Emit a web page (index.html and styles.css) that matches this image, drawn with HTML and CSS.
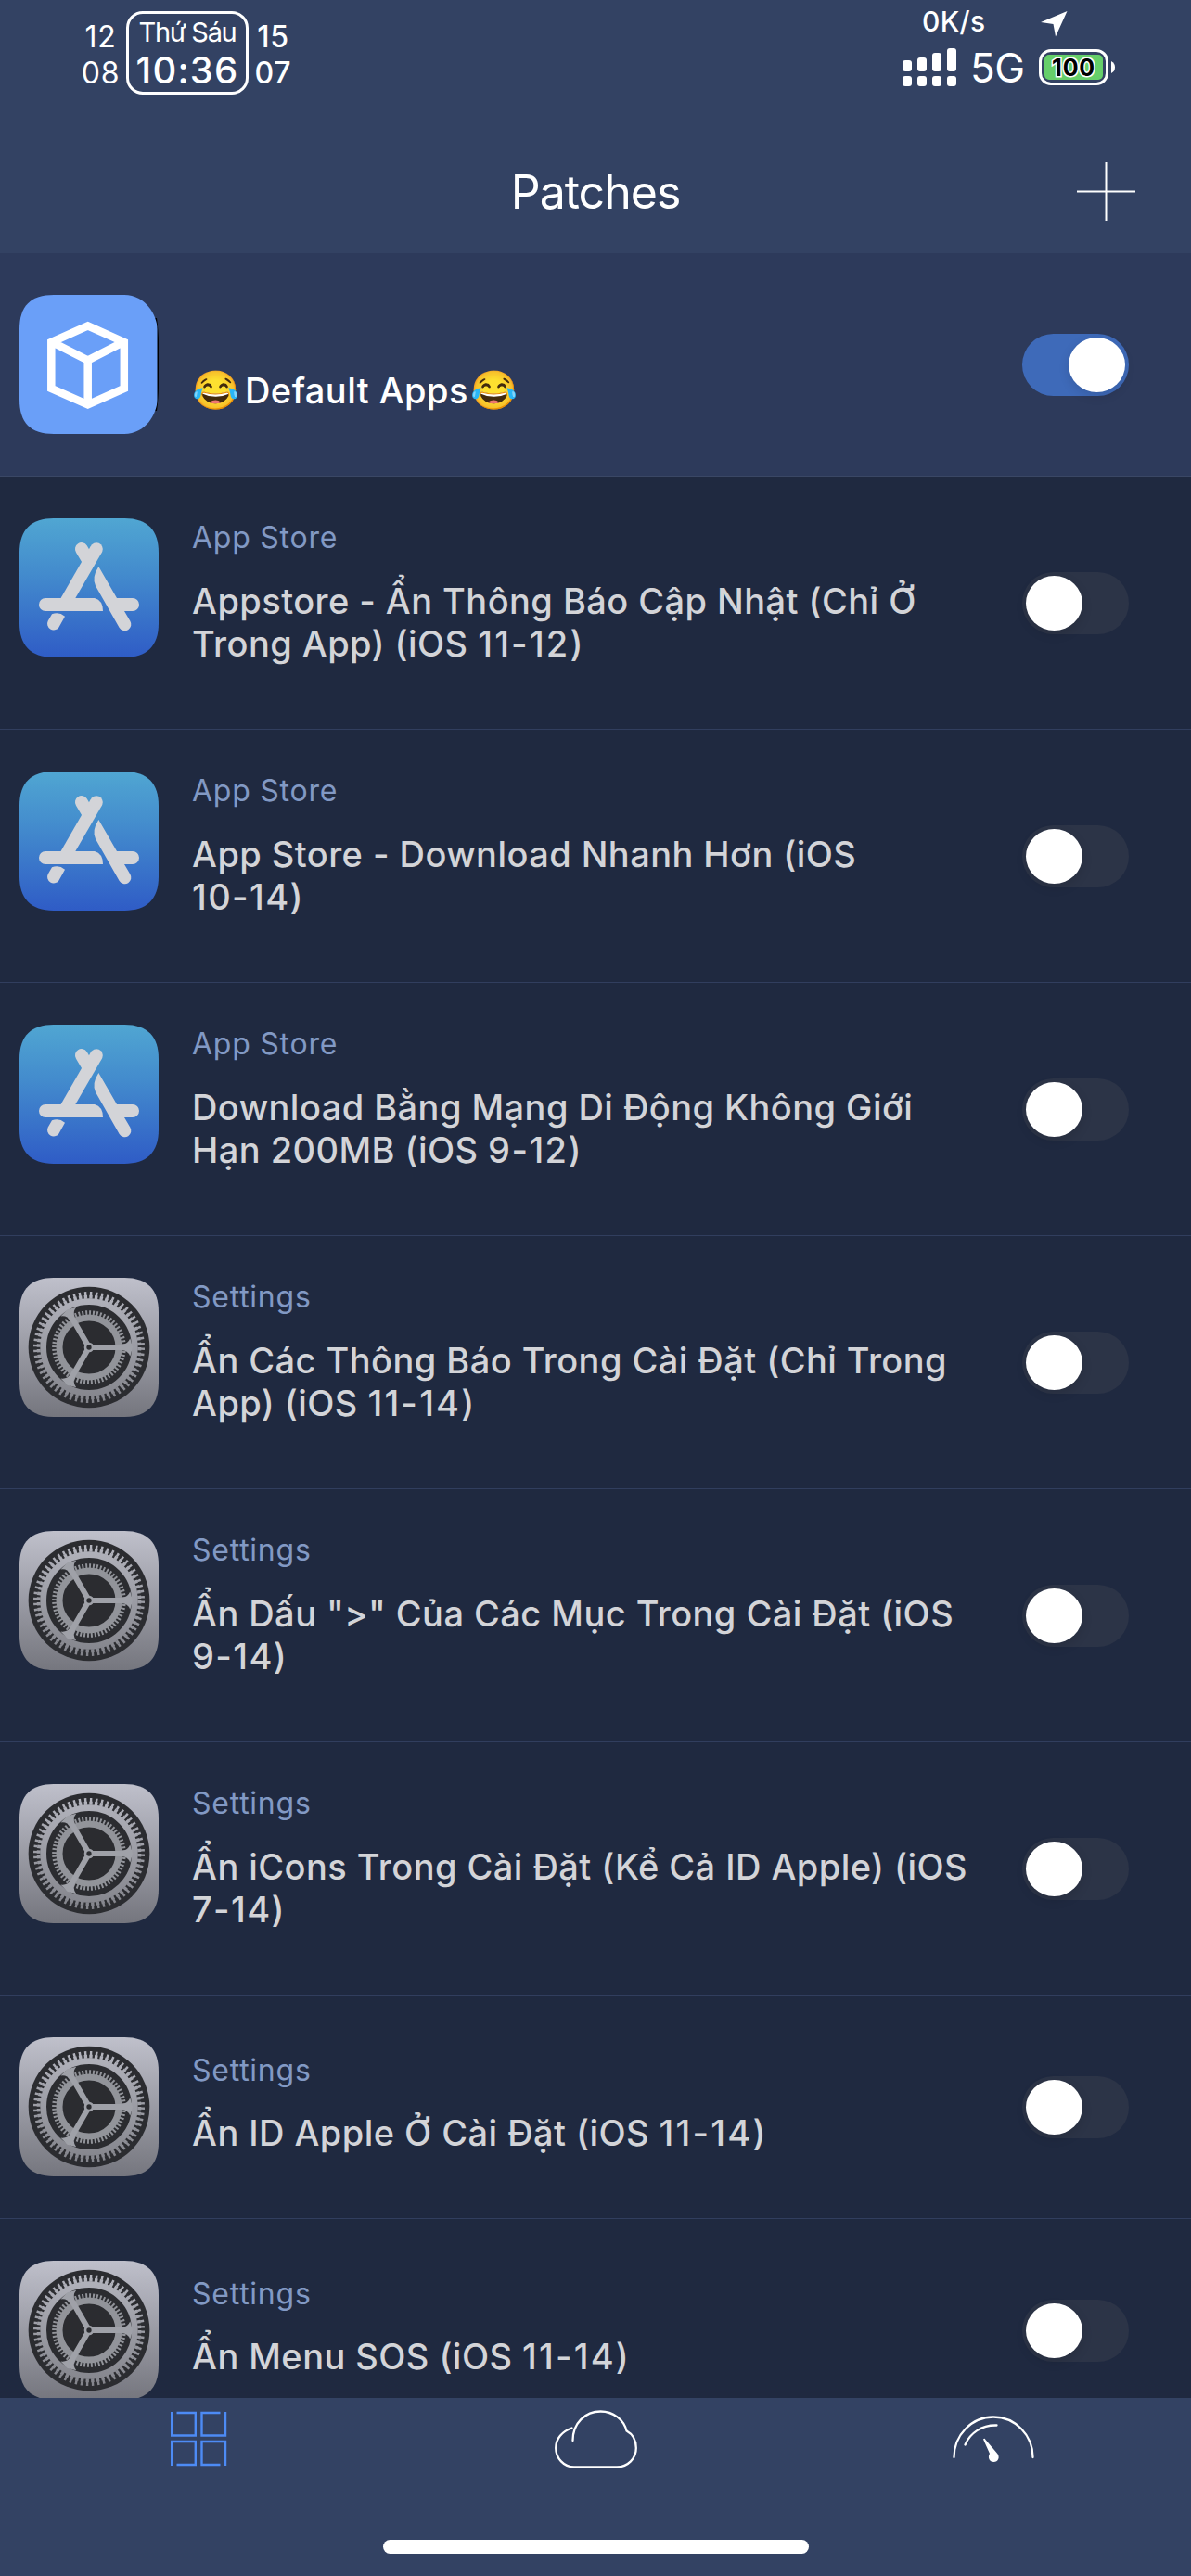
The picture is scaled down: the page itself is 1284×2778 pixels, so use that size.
FILE: index.html
```html
<!DOCTYPE html>
<html lang="vi">
<head>
<meta charset="utf-8">
<title>Patches</title>
<link rel="stylesheet" href="styles.css">
</head>
<body>
<svg class="defs" width="0" height="0" aria-hidden="true">
  <defs>
    <linearGradient id="store-bg" x1="0" y1="0" x2="0" y2="1">
      <stop offset="0" stop-color="#50a6d2"/><stop offset=".4" stop-color="#438bcd"/><stop offset="1" stop-color="#2f5cc6"/>
    </linearGradient>
    <linearGradient id="gear-bg" x1="0" y1="0" x2="0" y2="1">
      <stop offset="0" stop-color="#bfc0cb"/><stop offset="1" stop-color="#75767e"/>
    </linearGradient>
    <linearGradient id="ring" gradientUnits="userSpaceOnUse" x1="0" y1="45" x2="0" y2="405">
      <stop offset="0" stop-color="#b3b4bd"/><stop offset="1" stop-color="#83848b"/>
    </linearGradient>
  </defs>
  <symbol id="app-store" viewBox="0 0 450 450">
    <path fill="url(#store-bg)" d="M110 0H340C415 0 450 40 450 110V340C450 415 410 450 340 450H110C35 450 0 410 0 340V110C0 35 40 0 110 0Z"/>
    <g transform="translate(-63 -87)" fill="#d3d4d8">
      <path d="M312 186L211 361" stroke="#d3d4d8" stroke-width="41"/>
      <circle cx="312" cy="186" r="20.500"/>
      <path d="M246 197A20.500 20.500 0 0 1 281 175L288 187L300 205L266 231Z"/>
      <path d="M147 345H306Q333 352 333 387H147A21 21 0 0 1 147 345Z"/>
      <path d="M319 243L378 345H429A21 21 0 0 1 429 387H402L421 419A20.500 20.500 0 0 1 386 441L309 305Q296 278 319 243Z"/>
      <path d="M155 419L168 397Q190 388 210 404L190 440A20.500 20.500 0 0 1 155 419Z"/>
    </g>
  </symbol>
  <symbol id="settings" viewBox="0 0 450 450">
    <path fill="url(#gear-bg)" d="M110 0H340C415 0 450 40 450 110V340C450 415 410 450 340 450H110C35 450 0 410 0 340V110C0 35 40 0 110 0Z"/>
    <circle cx="225" cy="225" r="196" fill="#2b2c30"/>
    <g fill="none" stroke="url(#ring)">
      <circle cx="225" cy="225" r="148" stroke-width="20"/>
      <circle cx="225" cy="225" r="163" stroke-width="12" pathLength="120" stroke-dasharray="1.2 .8"/>
      <circle cx="225" cy="225" r="174" stroke-width="12" pathLength="120" stroke-dasharray=".8 1.2" stroke-dashoffset="-.2"/>
    </g>
    <g fill="none" stroke="#92949a">
      <circle cx="225" cy="225" r="96" stroke-width="21"/>
      <circle cx="225" cy="225" r="112" stroke-width="15" pathLength="120" stroke-dasharray="1 1"/>
    </g>
    <g fill="#9fa1a8">
      <path d="M225 216H330Q350 216 358 196L366 225L358 254Q350 234 330 234H225Z"/>
      <path transform="rotate(120 225 225)" d="M225 216H330Q350 216 358 196L366 225L358 254Q350 234 330 234H225Z"/>
      <path transform="rotate(240 225 225)" d="M225 216H330Q350 216 358 196L366 225L358 254Q350 234 330 234H225Z"/>
      <circle cx="225" cy="225" r="16"/>
    </g>
    <circle cx="225" cy="225" r="8" fill="#2b2c30"/>
  </symbol>
</svg>

<div class="screen">
  <header class="header">
    <div class="status">
      <div class="clock">
        <div class="date"><span>12</span><span>08</span></div>
        <div class="time"><span class="weekday">Thứ Sáu</span><span class="hour">10:36</span></div>
        <div class="date medium"><span>15</span><span>07</span></div>
      </div>
      <div class="indicators">
        <div class="speed">
          <span>0K/s</span>
          <svg width="29" height="28" viewBox="0 0 29 28"><path fill="#fff" d="M28.500 0L16 27.500L13.500 14L0 12Z"/></svg>
        </div>
        <div class="network">
          <svg width="58" height="41" viewBox="0 0 58 41" fill="#fff">
            <rect y="13" width="10" height="12" rx="3"/><rect x="16" y="10" width="10" height="15" rx="3"/><rect x="32" y="5" width="10" height="20" rx="3"/><rect x="48" width="10" height="25" rx="3"/>
            <rect y="30" width="10" height="11" rx="3"/><rect x="16" y="30" width="10" height="11" rx="3"/><rect x="32" y="30" width="10" height="11" rx="3"/><rect x="48" y="30" width="10" height="11" rx="3"/>
          </svg>
          <span class="carrier">5G</span>
          <div class="battery"><span>100</span></div>
          <svg class="nub" width="4" height="13" viewBox="0 0 4 13"><path fill="#fff" d="M0 0Q4 2 4 6.500T0 13Z"/></svg>
        </div>
      </div>
    </div>
    <div class="nav">
      <h1>Patches</h1>
      <svg class="plus" width="63" height="63" viewBox="0 0 63 63"><path stroke="#fff" stroke-width="2" d="M31.500 0V63M0 31.500H63"/></svg>
    </div>
  </header>

  <main class="list">
    <section class="row single active">
      <svg class="icon" viewBox="0 0 150 150">
        <path fill="#000" d="M140 25H148Q150 40 150 50V100Q150 110 148 125H140Z"/>
        <path fill="#6a9ff8" d="M37 0H113C136 0 148.500 22 148.500 37V113C148.500 128 136 150 113 150H37C12 150 0 138 0 113V37C0 12 12 0 37 0Z"/>
        <path fill="none" stroke="#fff" stroke-width="8.500" d="M73.700 33.300L112.800 51V101L73.700 118.300L34.300 101V51ZM34.300 50.500L73.700 70.500L112.800 50.500M73.700 70V118"/>
      </svg>
      <div class="text"><div class="label"></div><div class="name"><span class="emoji">😂</span>Default Apps<span class="emoji last">😂</span></div></div>
      <div class="switch on"></div>
    </section>
    <section class="row">
      <svg class="icon"><use href="#app-store"/></svg>
      <div class="text"><div class="label">App Store</div><div class="name">Appstore - Ẩn Thông Báo Cập Nhật (Chỉ Ở<br>Trong App) (iOS <span class="version wide">11-12</span>)</div></div>
      <div class="switch"></div>
    </section>
    <section class="row">
      <svg class="icon"><use href="#app-store"/></svg>
      <div class="text"><div class="label">App Store</div><div class="name">App Store - Download Nhanh Hơn (iOS<br><span class="version">10-14</span>)</div></div>
      <div class="switch"></div>
    </section>
    <section class="row">
      <svg class="icon"><use href="#app-store"/></svg>
      <div class="text"><div class="label">App Store</div><div class="name">Download Bằng Mạng Di Động Không Giới<br>Hạn 200MB (iOS <span class="version">9-12</span>)</div></div>
      <div class="switch"></div>
    </section>
    <section class="row">
      <svg class="icon"><use href="#settings"/></svg>
      <div class="text"><div class="label">Settings</div><div class="name">Ẩn Các Thông Báo Trong Cài Đặt (Chỉ Trong<br>App) (iOS <span class="version wide">11-14</span>)</div></div>
      <div class="switch"></div>
    </section>
    <section class="row">
      <svg class="icon"><use href="#settings"/></svg>
      <div class="text"><div class="label">Settings</div><div class="name">Ẩn Dấu "&gt;" Của Các Mục Trong Cài Đặt (iOS<br><span class="version">9-14</span>)</div></div>
      <div class="switch"></div>
    </section>
    <section class="row">
      <svg class="icon"><use href="#settings"/></svg>
      <div class="text"><div class="label">Settings</div><div class="name">Ẩn iCons Trong Cài Đặt (Kể Cả ID Apple) (iOS<br><span class="version">7-14</span>)</div></div>
      <div class="switch"></div>
    </section>
    <section class="row single">
      <svg class="icon"><use href="#settings"/></svg>
      <div class="text"><div class="label">Settings</div><div class="name">Ẩn ID Apple Ở Cài Đặt (iOS <span class="version wide">11-14</span>)</div></div>
      <div class="switch"></div>
    </section>
    <section class="row single">
      <svg class="icon"><use href="#settings"/></svg>
      <div class="text"><div class="label">Settings</div><div class="name">Ẩn Menu SOS (iOS <span class="version wide">11-14</span>)</div></div>
      <div class="switch"></div>
    </section>
  </main>

  <footer class="tabs">
    <nav class="tab-row">
      <svg width="90" height="66" viewBox="0 0 90 66" fill="none" stroke="#4d8bf5" stroke-width="2.400">
        <path d="M16.200 3V28.500H41.800V4H21.500M74 3V28.500H48.500V4H68.500M16.200 61V35H41.800V60H21.500M74 61V35H48.500V60H68.500"/>
      </svg>
      <svg width="90" height="66" viewBox="-1 0 90 66" fill="none" stroke="#fff" stroke-width="2.300" stroke-linecap="round" stroke-linejoin="round">
        <path d="M18.500 20.500C8 24 1.200 32 1.200 42C1.200 53 10 62.500 21 62.500H67C79 62.500 87.800 53 87.800 42C87.800 34 84 27 77.500 23.500C74.500 11 63 2.500 49.500 2.500C33 2.500 19.500 15 19.500 34"/>
      </svg>
      <svg width="90" height="66" viewBox="-1.500 0 90 66" fill="none" stroke="#fff" stroke-width="2.300" stroke-linecap="round">
        <path d="M2 52A42.500 43.500 0 0 1 87 52M14 38.500C19 26 32 17 48 17.500"/>
        <path fill="#fff" stroke="none" d="M33.500 32.500Q35 31 36 33L47.500 46.500C53 52 49 57 45 57C40 57 38 52 40.500 48Z"/>
      </svg>
    </nav>
    <div class="home"></div>
  </footer>
</div>
</body>
</html>
```
FILE: styles.css
```css
* { box-sizing: border-box; }
body { margin: 0; background: #1f2940; font-family: Inter, "Noto Sans", sans-serif; color: #fff; }
.defs { position: absolute; }
svg { display: block; flex: none; }
.screen { display: flex; flex-direction: column; width: 1284px; height: 2778px; overflow: hidden; }

.header { flex: none; height: 273px; background: #334263; }
.status { display: flex; justify-content: space-between; height: 120px; padding: 5px 82px 0 88px; }
.clock { display: flex; align-items: flex-start; }
.date { display: flex; flex-direction: column; align-items: center; width: 41px; padding-top: 15px; font-size: 32px; line-height: 39px; letter-spacing: .8px; }
.medium { font-weight: 500; }
.time { display: flex; flex-direction: column; align-items: center; width: 132px; height: 90px; margin: 7px 6px 0 7px; padding-top: 2px; border: 3px solid #fff; border-radius: 18px; white-space: nowrap; }
.weekday { font-size: 29px; line-height: 35px; letter-spacing: -1.3px; }
.hour { font-size: 40px; line-height: 47px; font-weight: 450; letter-spacing: 1.2px; }

.indicators { width: 229px; }
.speed { display: flex; align-items: center; height: 36px; padding-left: 21px; font-size: 30px; line-height: 36px; font-weight: 500; letter-spacing: .3px; }
.speed svg { margin: 6px 0 0 60px; }
.network { display: flex; align-items: center; height: 41px; margin-top: 11px; }
.carrier { width: 59px; margin: 2px 15px 0 15px; font-size: 44px; line-height: 41px; letter-spacing: -.6px; }
.battery { display: flex; align-items: center; justify-content: center; width: 75px; height: 39px; border: 3px solid #fff; border-radius: 13px; padding: 3px; }
.battery span { width: 63px; height: 27px; border-radius: 5px; background: #66cf6a; color: #000; font-size: 25px; line-height: 28px; font-weight: 700; text-align: center; letter-spacing: .8px; -webkit-text-stroke: 3px #fff; paint-order: stroke fill; }
.nub { margin-left: 3px; }

.nav { display: grid; grid-template-columns: 1fr auto 1fr; align-items: center; padding-top: 55px; }
.nav h1 { grid-column: 2; margin: 0; font-size: 50px; line-height: 60px; font-weight: 400; letter-spacing: -1px; }
.plus { justify-self: end; margin-right: 60px; }

.list { flex: 1; min-height: 0; overflow: hidden; }
.row { display: flex; height: 273px; padding: 45px 67px 0 21px; border-bottom: 1px solid #313e5e; }
.single { height: 241px; }
.active { background: #2d3a5b; border-color: #3a4765; }
.icon { width: 150px; height: 150px; }
.text { flex: 1; padding: 1px 0 0 36px; white-space: nowrap; }
.label { height: 40px; margin-bottom: 25px; font-size: 32px; line-height: 40px; letter-spacing: .75px; color: #8299c4; }
.name { font-size: 38px; line-height: 46px; font-weight: 500; letter-spacing: .44px; color: #d3d4d8; }
.version { letter-spacing: 1.4px; }
.wide { letter-spacing: 2.2px; }
.single .text { padding-top: 16px; }
.single .label { margin-bottom: 24px; }
.active .name { color: #fff; }
.emoji { display: inline-block; width: 57px; font-size: 41px; line-height: 40px; }
.last { padding-left: 2px; }

.switch { display: flex; align-self: center; width: 115px; height: 67px; margin-top: -44px; padding: 4px; border-radius: 34px; background: #2c3447; }
.switch::before { content: ""; width: 61px; height: 59px; border-radius: 50%; background: #fff; box-shadow: 0 4px 12px rgba(0, 0, 0, .12); }
.on { justify-content: flex-end; background: #3e6ab9; }

.tabs { display: flex; flex-direction: column; align-items: center; justify-content: space-between; flex: none; height: 192px; padding: 12px 0 24px; background: #334263; }
.tab-row { display: grid; grid-template-columns: repeat(3, 1fr); justify-items: center; width: 1284px; }
.home { width: 459px; height: 15px; border-radius: 8px; background: #fff; }
```
